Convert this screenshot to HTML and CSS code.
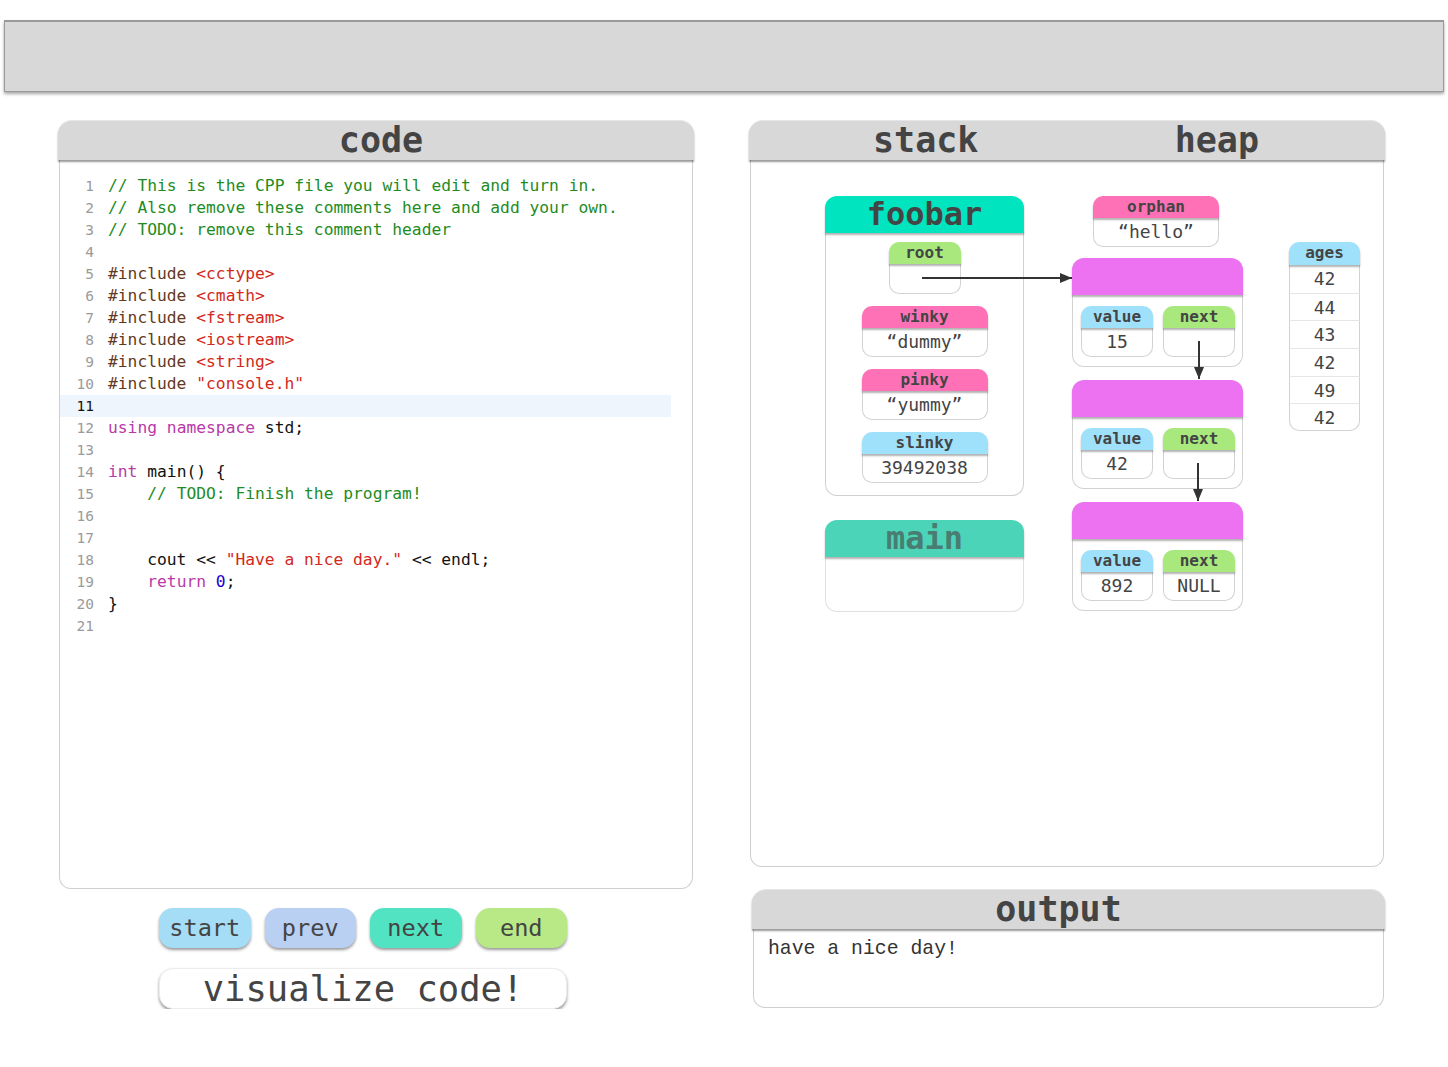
FILE: index.html
```html
<!DOCTYPE html>
<html>
<head>
<meta charset="utf-8">
<link rel="stylesheet" href="styles.css">
</head>
<body>
<div class="topbar"></div>
<div class="layout">
  <div class="left-col">
    <section class="panel code-panel">
      <div class="panel-head code-head"><span>code</span></div>
      <div class="panel-body code-body">
        <div class="line"><span class="ln">1</span><span class="src"><span class="cm">// This is the CPP file you will edit and turn in.</span></span></div>
        <div class="line"><span class="ln">2</span><span class="src"><span class="cm">// Also remove these comments here and add your own.</span></span></div>
        <div class="line"><span class="ln">3</span><span class="src"><span class="cm">// TODO: remove this comment header</span></span></div>
        <div class="line"><span class="ln">4</span><span class="src"></span></div>
        <div class="line"><span class="ln">5</span><span class="src"><span class="pp">#include</span> <span class="st">&lt;cctype&gt;</span></span></div>
        <div class="line"><span class="ln">6</span><span class="src"><span class="pp">#include</span> <span class="st">&lt;cmath&gt;</span></span></div>
        <div class="line"><span class="ln">7</span><span class="src"><span class="pp">#include</span> <span class="st">&lt;fstream&gt;</span></span></div>
        <div class="line"><span class="ln">8</span><span class="src"><span class="pp">#include</span> <span class="st">&lt;iostream&gt;</span></span></div>
        <div class="line"><span class="ln">9</span><span class="src"><span class="pp">#include</span> <span class="st">&lt;string&gt;</span></span></div>
        <div class="line"><span class="ln">10</span><span class="src"><span class="pp">#include</span> <span class="st">"console.h"</span></span></div>
        <div class="line active"><span class="ln">11</span><span class="src"></span></div>
        <div class="line"><span class="ln">12</span><span class="src"><span class="kw">using</span> <span class="kw">namespace</span> std;</span></div>
        <div class="line"><span class="ln">13</span><span class="src"></span></div>
        <div class="line"><span class="ln">14</span><span class="src"><span class="kw">int</span> main() {</span></div>
        <div class="line"><span class="ln">15</span><span class="src">    <span class="cm">// TODO: Finish the program!</span></span></div>
        <div class="line"><span class="ln">16</span><span class="src"></span></div>
        <div class="line"><span class="ln">17</span><span class="src"></span></div>
        <div class="line"><span class="ln">18</span><span class="src">    cout &lt;&lt; <span class="st">"Have a nice day."</span> &lt;&lt; endl;</span></div>
        <div class="line"><span class="ln">19</span><span class="src">    <span class="kw">return</span> <span class="nu">0</span>;</span></div>
        <div class="line"><span class="ln">20</span><span class="src">}</span></div>
        <div class="line"><span class="ln">21</span><span class="src"></span></div>
      </div>
    </section>
    <div class="controls">
      <div class="btn-row">
        <button class="btn btn-start">start</button>
        <button class="btn btn-prev">prev</button>
        <button class="btn btn-next">next</button>
        <button class="btn btn-end">end</button>
      </div>
      <button class="visualize">visualize code!</button>
    </div>
  </div>
  <div class="right-col">
    <section class="panel mem-panel">
      <div class="panel-head split"><span>stack</span><span>heap</span></div>
      <div class="panel-body mem-body">
        <div class="diagram">
          <div class="stack-col">
            <div class="frame">
              <div class="frame-head foobar-head">foobar</div>
              <div class="frame-body">
                <div class="var var-root">
                  <div class="var-head green">root</div>
                  <div class="var-val"></div>
                </div>
                <div class="var">
                  <div class="var-head pink">winky</div>
                  <div class="var-val">“dummy”</div>
                </div>
                <div class="var">
                  <div class="var-head pink">pinky</div>
                  <div class="var-val">“yummy”</div>
                </div>
                <div class="var">
                  <div class="var-head blue">slinky</div>
                  <div class="var-val">39492038</div>
                </div>
              </div>
            </div>
            <div class="frame">
              <div class="frame-head main-head">main</div>
              <div class="frame-body empty"></div>
            </div>
          </div>
          <div class="heap-col">
            <div class="var var-orphan">
              <div class="var-head pink">orphan</div>
              <div class="var-val">“hello”</div>
            </div>
            <div class="node">
              <div class="node-head"></div>
              <div class="node-body">
                <div class="var var-small"><div class="var-head blue">value</div><div class="var-val">15</div></div>
                <div class="var var-small"><div class="var-head green">next</div><div class="var-val"></div></div>
              </div>
            </div>
            <div class="node">
              <div class="node-head"></div>
              <div class="node-body">
                <div class="var var-small"><div class="var-head blue">value</div><div class="var-val">42</div></div>
                <div class="var var-small"><div class="var-head green">next</div><div class="var-val"></div></div>
              </div>
            </div>
            <div class="node">
              <div class="node-head"></div>
              <div class="node-body">
                <div class="var var-small"><div class="var-head blue">value</div><div class="var-val">892</div></div>
                <div class="var var-small"><div class="var-head green">next</div><div class="var-val">NULL</div></div>
              </div>
            </div>
          </div>
          <div class="array">
            <div class="var-head blue array-head">ages</div>
            <div class="cell">42</div>
            <div class="cell">44</div>
            <div class="cell">43</div>
            <div class="cell">42</div>
            <div class="cell">49</div>
            <div class="cell">42</div>
          </div>
        </div>
        <svg class="arrows" width="634" height="400" viewBox="0 0 634 400">
          <defs>
            <marker id="ah" markerWidth="12" markerHeight="10" refX="12" refY="5" orient="auto" markerUnits="userSpaceOnUse">
              <path d="M0,0 L12,5 L0,10 Z" fill="#333"/>
            </marker>
          </defs>
          <line x1="171" y1="118" x2="321" y2="118" stroke="#333" stroke-width="2" marker-end="url(#ah)"/>
          <line x1="448" y1="181" x2="448" y2="219" stroke="#333" stroke-width="2" marker-end="url(#ah)"/>
          <line x1="447" y1="303" x2="447" y2="341" stroke="#333" stroke-width="2" marker-end="url(#ah)"/>
        </svg>
      </div>
    </section>
    <section class="panel output-panel">
      <div class="panel-head output-head"><span>output</span></div>
      <div class="panel-body output-body">have a nice day!</div>
    </section>
  </div>
</div>
</body>
</html>
```

FILE: styles.css
```css
* { box-sizing: border-box; }

body {
  margin: 0;
  padding-top: 20px;
  background: #fff;
  font-family: "DejaVu Sans Mono", monospace;
  color: #444;
}

.topbar {
  margin: 0 4px;
  height: 72px;
  background: #d8d8d8;
  border: 1px solid #9a9a9a;
  border-top-width: 2px;
  box-shadow: 0 2px 3px rgba(0,0,0,0.35);
}

.layout {
  display: flex;
  gap: 55px;
  margin-top: 28px;
  padding-left: 58px;
}

.left-col { width: 636px; }
.right-col { width: 636px; }

.panel { display: flex; flex-direction: column; }

.panel-head {
  position: relative;
  z-index: 2;
  height: 40px;
  background: #d8d8d8;
  border-radius: 14px 14px 0 0;
  border-top: 1px solid #e6e6e6;
  box-shadow: 0 2px 2px rgba(0,0,0,0.4);
  text-align: center;
  font-weight: bold;
  font-size: 35px;
  line-height: 39px;
  color: #444;
}

.code-head { padding-left: 10px; }
.output-head { padding-right: 20px; }

.panel-head.split {
  display: flex;
  justify-content: space-between;
  padding: 0 126px 0 124px;
}

.panel-body {
  position: relative;
  flex: 1;
  margin: 0 1px;
  border: 1px solid #cfcfcf;
  border-top: none;
  border-radius: 0 0 12px 12px;
  background: #fff;
}

/* code */
.code-panel { height: 769px; }

.code-body {
  padding-top: 15px;
}

.line {
  display: flex;
  width: 611px;
  height: 22px;
  line-height: 22px;
}

.code-body .line.active { background: #eef5fd; }

.ln {
  width: 34px;
  text-align: right;
  font-size: 14.5px;
  color: #9a9a9a;
  font-family: "DejaVu Sans Mono", monospace;
}

.line.active .ln { color: #111; }

.src {
  margin-left: 14px;
  white-space: pre;
  font-size: 16.3px;
  color: #111;
}

.cm { color: #1f8c1f; }
.pp { color: #643820; }
.st { color: #d3281c; }
.kw { color: #b83aa8; }
.nu { color: #1c00cf; }

/* controls */
.controls {
  margin-top: 19px;
  padding-left: 101px;
}

.btn-row {
  display: flex;
  gap: 14px;
}

.btn, .visualize {
  border: none;
  font-family: "DejaVu Sans Mono", monospace;
  color: #444;
  padding: 0;
  box-shadow: 0 2px 3px rgba(0,0,0,0.4);
}

.btn {
  width: 91.5px;
  height: 40px;
  border-radius: 14px;
  font-size: 23.6px;
}

.btn-start { background: #a6ddf6; }
.btn-prev { background: #bad0f3; }
.btn-next { background: #52e3c2; }
.btn-end { background: #b8e986; }

.visualize {
  display: block;
  margin-top: 20px;
  width: 408px;
  height: 41px;
  border-radius: 14px;
  background: #fff;
  border: 1px solid #ececec;
  font-size: 35.5px;
  line-height: 38px;
}

/* memory */
.mem-panel { height: 747px; }

.diagram {
  display: flex;
  align-items: flex-start;
  padding: 36px 0 0 74px;
}

.stack-col {
  width: 199px;
  display: flex;
  flex-direction: column;
  gap: 24px;
}

.frame-head {
  position: relative;
  z-index: 1;
  height: 37px;
  border-radius: 12px 12px 0 0;
  box-shadow: 0 2px 2px rgba(0,0,0,0.3);
  text-align: center;
  font-weight: bold;
  font-size: 32px;
  line-height: 37px;
}

.foobar-head { background: #00e5c0; color: #444; }
.main-head { background: #4cd4b9; color: #4a7d72; }

.frame-body {
  border: 1px solid #d0d0d0;
  border-top: none;
  border-radius: 0 0 12px 12px;
  padding: 9px 0 12px;
  display: flex;
  flex-direction: column;
  align-items: center;
  gap: 12px;
}

.frame-body.empty {
  height: 55px;
  border-color: #e0e0e0;
}

.var {
  width: 126px;
  display: flex;
  flex-direction: column;
}

.var-root { width: 72px; }
.var-small { width: 72px; }
.var-orphan { margin-right: 3px; }

.var-head {
  position: relative;
  z-index: 1;
  height: 22px;
  border-radius: 10px 10px 0 0;
  box-shadow: 0 2px 2px rgba(0,0,0,0.3);
  text-align: center;
  font-weight: bold;
  font-size: 16px;
  line-height: 21px;
  color: #444;
}

.green { background: #a8e87d; }
.pink { background: #ff71b6; }
.blue { background: #9fe1fb; }

.var-val {
  height: 29px;
  border: 1px solid #d2d2d2;
  border-top: none;
  border-radius: 0 0 10px 10px;
  text-align: center;
  font-size: 18px;
  line-height: 28px;
  color: #444;
  background: #fff;
}

.var-root .var-val { height: 30px; }

.heap-col {
  margin-left: 48px;
  width: 171px;
  display: flex;
  flex-direction: column;
  align-items: center;
  gap: 12px;
}

.heap-col > .var + .node { margin-top: -1px; }

.node {
  width: 171px;
  display: flex;
  flex-direction: column;
}

.node + .node { margin-top: 1px; }

.node-head {
  position: relative;
  z-index: 1;
  height: 37px;
  border-radius: 12px 12px 0 0;
  background: #ec72f1;
  box-shadow: 0 2px 2px rgba(0,0,0,0.3);
}

.node-body {
  height: 72px;
  border: 1px solid #d2d2d2;
  border-top: none;
  border-radius: 0 0 12px 12px;
  padding: 11px 0 0 8px;
  display: flex;
  gap: 10px;
}

.array {
  margin-left: 46px;
  margin-top: 46px;
  width: 71px;
  display: flex;
  flex-direction: column;
  border-radius: 10px;
}

.array-head { height: 23px; line-height: 22px; }

.cell {
  height: 27.7px;
  border-left: 1px solid #d2d2d2;
  border-right: 1px solid #d2d2d2;
  border-top: 1px solid #e6e6e6;
  text-align: center;
  font-size: 18px;
  line-height: 27px;
  color: #444;
}

.array-head + .cell { border-top: none; }

.cell:last-child {
  border-bottom: 1px solid #d2d2d2;
  border-radius: 0 0 10px 10px;
}

.arrows {
  position: absolute;
  left: 0;
  top: 0;
  pointer-events: none;
}

/* output */
.output-panel {
  margin-top: 22px;
  margin-left: 3px;
  height: 119px;
}

.output-body {
  padding: 8px 0 0 14px;
  font-family: "Liberation Mono", monospace;
  font-size: 19.8px;
  line-height: 24px;
  color: #333;
}
```
